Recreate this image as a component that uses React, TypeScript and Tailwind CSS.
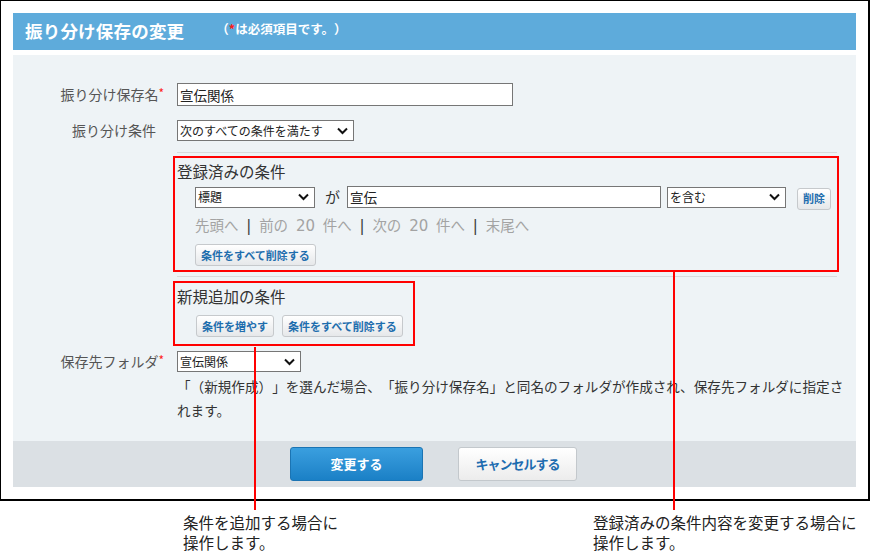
import type { ReactNode } from 'react';

const FONT = "font-['Noto_Sans_CJK_JP','Noto_Sans',sans-serif] [text-spacing-trim:space-all]";

function Chevron() {
  return (
    <svg width="11" height="8" viewBox="0 0 11 8" className="shrink-0">
      <path d="M1 1.5 L5.5 6 L10 1.5" fill="none" stroke="#111" strokeWidth="2" />
    </svg>
  );
}

function Select({ value, width }: { value: string; width: string }) {
  return (
    <div
      className={`${width} h-[21px] flex items-center justify-between border border-[#767676] bg-white pl-[2px] pr-[5px] text-[12px] text-[#222]`}
    >
      <span>{value}</span>
      <Chevron />
    </div>
  );
}

function SmallButton({ children }: { children: ReactNode }) {
  return (
    <button className="h-[22px] px-[5px] rounded-[3px] border border-[#c6c9cc] bg-gradient-to-b from-white to-[#e6e8ea] text-[11px] font-bold text-[#1f6eae] leading-none">
      {children}
    </button>
  );
}

function Label({ children, required }: { children: ReactNode; required?: boolean }) {
  return (
    <div className="w-[152px] shrink-0 pr-[1px] text-right text-[14px] text-[#555]">
      {children}
      {required ? <span className="text-[#ff2020] text-[12px] align-top">*</span> : <span className="inline-block w-[8px]" />}
    </div>
  );
}

const Sep = () => <div className="ml-[164px] w-[660px] h-px bg-[#d8dadc]" />;

export default function App() {
  return (
    <div className={`${FONT} relative w-[870px] h-[560px] bg-white`}>
      {/* framed screen */}
      <div className="w-[870px] h-[501px] border-t border-l border-r-2 border-b-2 border-black px-[12px] pt-[12px]">
        <div className="h-[37px] bg-[#5eabdb] flex items-center pl-[12px] text-white font-bold">
          <span className="text-[17.5px] tracking-[0.2px]">振り分け保存の変更</span>
          <span className="ml-[32px] text-[12.5px] -mt-[4px]">
            （<span className="text-[#ff1a1a]">*</span>は必須項目です。）
          </span>
        </div>

        <div className="mt-[5px] h-[386px] bg-[#eef3f6] pt-[28px]">
          <div className="flex items-center">
            <Label required>振り分け保存名</Label>
            <input
              readOnly
              value="宣伝関係"
              className="ml-[12px] w-[336px] h-[23px] border border-[#767676] bg-white px-[2px] text-[13.5px] text-[#222] outline-none"
            />
          </div>

          <div className="flex items-center mt-[14px]">
            <Label>振り分け条件</Label>
            <div className="ml-[12px]">
              <Select value="次のすべての条件を満たす" width="w-[177px]" />
            </div>
          </div>

          <div className="mt-[11px]" />
          <Sep />

          {/* registered conditions */}
          <div className="ml-[160px] mt-[3px] w-[666px] h-[116px] border-2 border-[#ff0000] pl-[2px]">
            <div className="text-[15.5px] text-[#333] leading-[20px] mt-[3px]">登録済みの条件</div>
            <div className="flex items-center h-[22px] mt-[5px] pl-[18px]">
              <Select value="標題" width="w-[120px]" />
              <span className="ml-[10px] text-[15px] leading-[20px] text-[#333]">が</span>
              <input
                readOnly
                value="宣伝"
                className="ml-[7px] w-[314px] h-[22px] border border-[#767676] bg-white px-[2px] text-[13.5px] text-[#222] outline-none"
              />
              <div className="ml-[6px]">
                <Select value="を含む" width="w-[119px]" />
              </div>
              <div className="ml-[11px] mt-[3px] flex">
                <SmallButton>削除</SmallButton>
              </div>
            </div>
            <div className="pl-[18px] mt-[7px] text-[15px] leading-[22px] text-[#a3a3a3] font-['DejaVu_Sans','Noto_Sans_CJK_JP',sans-serif] [word-spacing:3px]">
              <span className="text-[14.5px]">先頭へ</span> <span className="text-[#3a3a3a]">|</span>{' '}
              <span className="text-[14.5px]">前の</span> 20 <span className="text-[14.5px]">件へ</span>{' '}
              <span className="text-[#3a3a3a]">|</span> <span className="text-[14.5px]">次の</span> 20{' '}
              <span className="text-[14.5px]">件へ</span> <span className="text-[#3a3a3a]">|</span>{' '}
              <span className="text-[14.5px]">末尾へ</span>
            </div>
            <div className="pl-[18px] mt-[7px] flex">
              <SmallButton>条件をすべて削除する</SmallButton>
            </div>
          </div>

          <div className="mt-[4px]" />
          <Sep />

          {/* new conditions */}
          <div className="ml-[160px] mt-[4px] w-[242px] h-[65px] border-2 border-[#ff0000] pl-[2px]">
            <div className="text-[15.5px] text-[#333] leading-[20px] mt-[3px]">新規追加の条件</div>
            <div className="flex gap-[8px] pl-[19px] mt-[9px]">
              <SmallButton>条件を増やす</SmallButton>
              <SmallButton>条件をすべて削除する</SmallButton>
            </div>
          </div>

          <div className="flex items-center mt-[5px]">
            <Label required>保存先フォルダ</Label>
            <div className="ml-[12px]">
              <Select value="宣伝関係" width="w-[124px]" />
            </div>
          </div>
          <div className="ml-[164px] mt-[2px] w-[668px] text-[13.6px] leading-[24px] text-[#333]">
            「（新規作成）」を選んだ場合、「振り分け保存名」と同名のフォルダが作成され、保存先フォルダに指定されます。
          </div>
        </div>

        <div className="h-[46px] bg-[#dbe0e4] flex items-center pl-[277px] gap-[35px]">
          <button className="w-[133px] h-[34px] rounded-[3px] border border-[#1b74b3] bg-gradient-to-b from-[#3a9fdf] to-[#1a80c6] text-white text-[13px] font-bold">
            変更する
          </button>
          <button className="w-[119px] h-[34px] rounded-[3px] border border-[#c3c8cc] bg-gradient-to-b from-white to-[#ececec] text-[#1d6cb0] text-[13px] font-bold tracking-[-1px]">
            キャンセルする
          </button>
        </div>
      </div>

      {/* callout lines */}
      <div className="absolute left-[254px] top-[347px] w-[2px] h-[163px] bg-[#ff0000]" />
      <div className="absolute left-[673px] top-[272px] w-[2px] h-[238px] bg-[#ff0000]" />

      {/* annotations */}
      <div className="flex pl-[183px] mt-[11px] text-[15.5px] leading-[20px] text-[#222]">
        <div className="w-[410px]">
          条件を追加する場合に
          <br />
          操作します。
        </div>
        <div>
          登録済みの条件内容を変更する場合に
          <br />
          操作します。
        </div>
      </div>
    </div>
  );
}
